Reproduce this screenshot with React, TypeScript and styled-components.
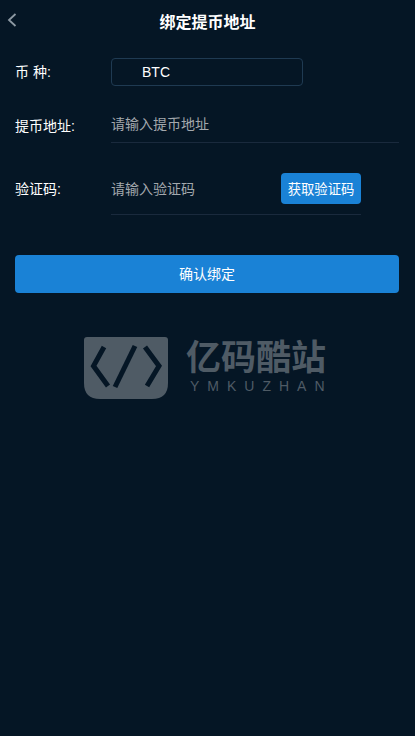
import styled, { createGlobalStyle } from "styled-components"

const GlobalStyle = createGlobalStyle`
  html, body {
    margin: 0;
    padding: 0;
    background: #051625;
  }
  body {
    font-family: "Liberation Sans", "Noto Sans CJK SC", sans-serif;
  }
`

const App = () => {
  return (
    <>
      <GlobalStyle />
      <Page>
        <Header>
          <BackButton aria-label="back">
            <svg width="10" height="14" viewBox="0 0 10 14" fill="none">
              <path d="M8.5 1 L2 7 L8.5 13" stroke="#8d99a3" strokeWidth="1.8" />
            </svg>
          </BackButton>
          <Title>绑定提币地址</Title>
        </Header>
        <CoinRow>
          <Label $lineHeight={32}>币 种:</Label>
          <CoinBox>BTC</CoinBox>
        </CoinRow>
        <AddressRow>
          <Label>提币地址:</Label>
          <Field>
            <Placeholder $lineHeight={26}>请输入提币地址</Placeholder>
          </Field>
        </AddressRow>
        <CodeRow>
          <Label $lineHeight={32}>验证码:</Label>
          <CodeField>
            <Placeholder $lineHeight={32}>请输入验证码</Placeholder>
            <CodeButton>获取验证码</CodeButton>
          </CodeField>
        </CodeRow>
        <ConfirmButton>确认绑定</ConfirmButton>
        <Watermark>
          <LogoBadge>
            <svg width="84" height="62" viewBox="0 0 84 62" fill="none">
              <path d="M0 3 Q0 0 3 0 H81 Q84 0 84 3 V46 Q84 62 68 62 H16 Q0 62 0 46 Z" fill="#4f5b65" />
              <path d="M20 10 L9.5 29 L24 49" stroke="#051625" strokeWidth="5" />
              <path d="M61 10 L75 29 L63 49" stroke="#051625" strokeWidth="5" />
              <path d="M51 9 L31 50" stroke="#051625" strokeWidth="5" />
            </svg>
          </LogoBadge>
          <LogoText>
            <LogoName>亿码酷站</LogoName>
            <LogoLatin>YMKUZHAN</LogoLatin>
          </LogoText>
        </Watermark>
      </Page>
    </>
  )
}
export default App

const Page = styled.div`
  position: relative;
  width: 415px;
  height: 736px;
  overflow: hidden;
  background: #051625;
  color: #fff;
`

const Header = styled.header`
  position: relative;
  display: flex;
  align-items: center;
  justify-content: center;
  box-sizing: border-box;
  height: 45px;
  padding-bottom: 3px;
`

const BackButton = styled.div`
  position: absolute;
  left: 7px;
  top: 13px;
  display: flex;
`

const Title = styled.h1`
  margin: 0;
  font-size: 16px;
  font-weight: 700;
  color: #fff;
`

const Row = styled.div`
  display: flex;
  padding-left: 15px;
`

const CoinRow = styled(Row)`
  align-items: center;
  margin-top: 11px;
`

const AddressRow = styled(Row)`
  align-items: flex-start;
  margin-top: 23px;
  padding-right: 16px;
`

const CodeRow = styled(Row)`
  align-items: flex-start;
  margin-top: 30px;
`

const Label = styled.div<{ $lineHeight?: number }>`
  width: 96px;
  flex: none;
  font-size: 14px;
  line-height: ${(props) => props.$lineHeight ?? 30}px;
  color: #fff;
`

const CoinBox = styled.div`
  box-sizing: border-box;
  width: 192px;
  height: 28px;
  padding-left: 30px;
  border: 1px solid #1f3a52;
  border-radius: 4px;
  font-size: 14px;
  line-height: 26px;
  color: #fff;
`

const Field = styled.div`
  flex: 1;
  height: 31px;
  border-bottom: 1px solid #1a2a3d;
`

const CodeField = styled.div`
  display: flex;
  align-items: flex-start;
  justify-content: space-between;
  width: 250px;
  height: 41px;
  border-bottom: 1px solid #1a2a3d;
`

const Placeholder = styled.span<{ $lineHeight: number }>`
  display: block;
  font-size: 14px;
  line-height: ${(props) => props.$lineHeight}px;
  color: #a3a8ad;
`

const CodeButton = styled.button`
  width: 80px;
  height: 31px;
  padding: 0;
  border: 0;
  border-radius: 4px;
  background: #1a82d6;
  color: #fff;
  font: inherit;
  font-size: 13.33px;
`

const ConfirmButton = styled.button`
  display: block;
  width: 384px;
  height: 38px;
  margin: 40px 0 0 15px;
  padding: 0 0 2px;
  border: 0;
  border-radius: 4px;
  background: #1a82d6;
  color: #fff;
  font: inherit;
  font-size: 14px;
`

const Watermark = styled.div`
  position: absolute;
  left: 84px;
  top: 337px;
  display: flex;
  gap: 18px;
`

const LogoBadge = styled.div`
  display: flex;
`

const LogoText = styled.div`
  display: flex;
  flex-direction: column;
  padding-top: 1px;
`

const LogoName = styled.div`
  font-size: 35px;
  line-height: 40px;
  font-weight: 700;
  color: #4f5b65;
  white-space: nowrap;
`

const LogoLatin = styled.div`
  padding-left: 4px;
  font-size: 14px;
  line-height: 16px;
  letter-spacing: 8px;
  color: #4f5b65;
  white-space: nowrap;
`
